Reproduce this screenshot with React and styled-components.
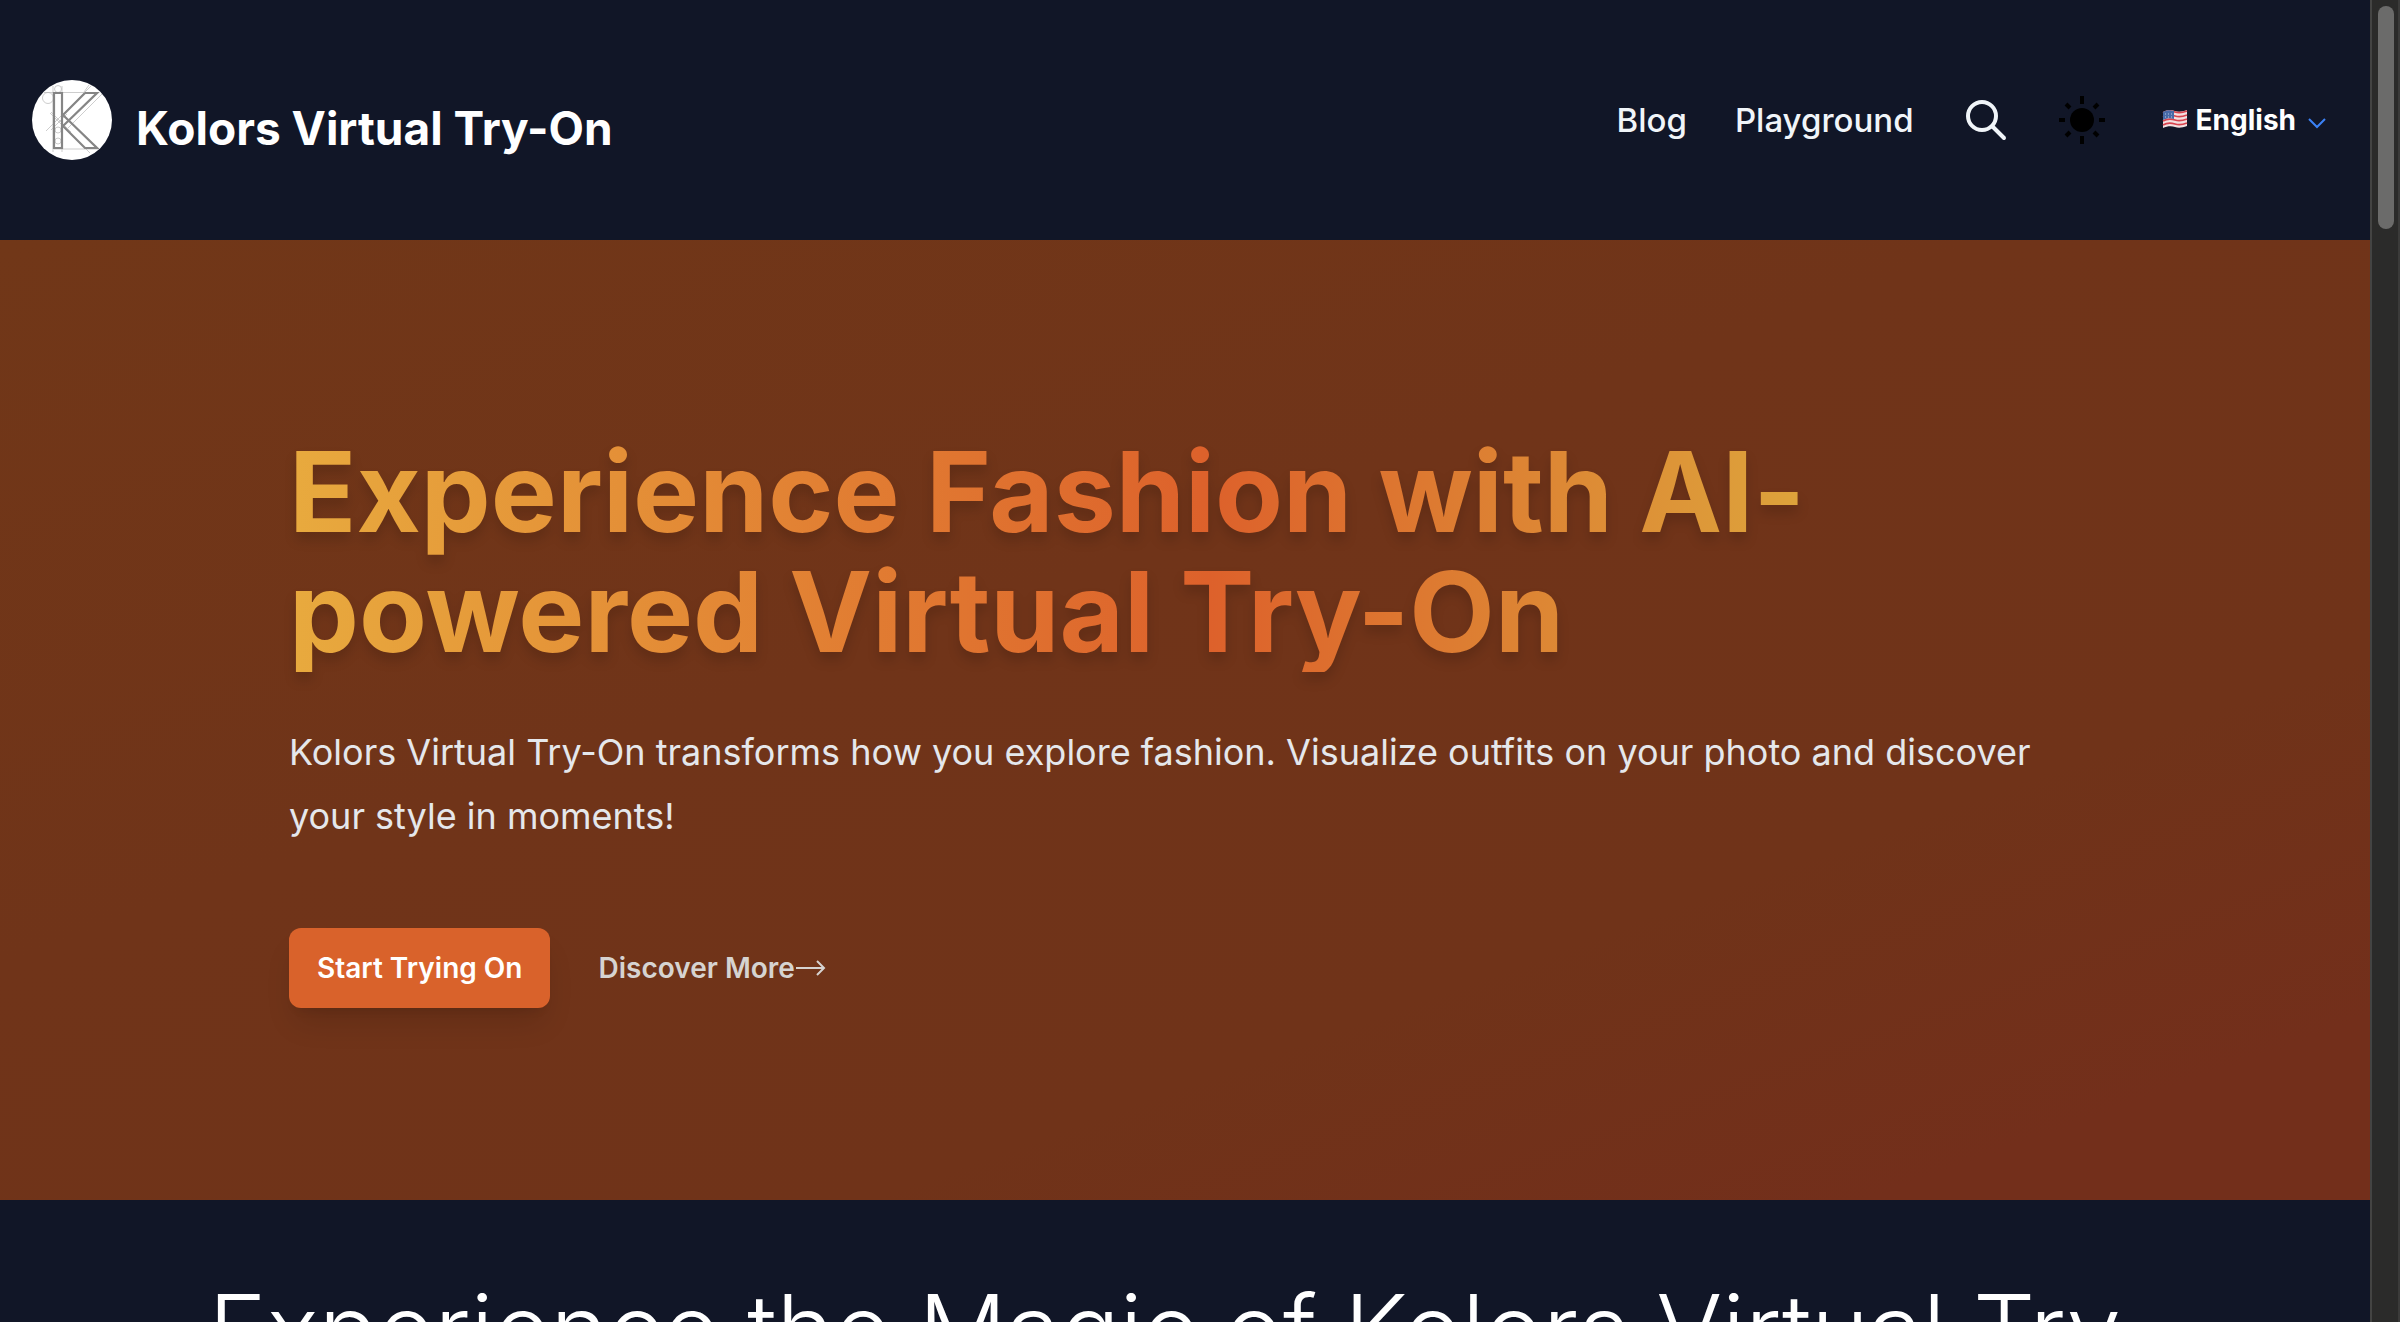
import React from "react";
import styled, { createGlobalStyle } from "styled-components";

const GlobalStyle = createGlobalStyle`
    * {
        box-sizing: border-box;
    }
    body {
        margin: 0;
        background-color: #111627;
        color: #fff;
        font-family: Inter, "Liberation Sans", sans-serif;
        overflow: hidden;
    }
    a {
        color: inherit;
        text-decoration: none;
    }
`;

const Page = styled.div`
    display: flex;
    height: 100vh;
    overflow: hidden;
`;

const Content = styled.div`
    flex: 1;
    min-width: 0;
`;

const ScrollTrack = styled.div`
    flex: none;
    width: 30px;
    padding: 6px 4px 6px 6px;
    background-color: #2b2b2a;
    border-left: 2px solid #444443;
    border-right: 2px solid #3b3b3a;
`;

const ScrollThumb = styled.div`
    width: 16px;
    height: 223px;
    border-radius: 8px;
    background-color: #6b6b6a;
`;

const Header = styled.header`
    display: flex;
    align-items: center;
    justify-content: space-between;
    height: 240px;
    padding: 0 44px 0 32px;
`;

const Brand = styled.a`
    display: flex;
    align-items: center;
    gap: 24px;
`;

const LogoIcon = styled.svg`
    width: 80px;
    height: 80px;
`;

const BrandName = styled.span`
    padding-top: 16px;
    font-size: 46px;
    font-weight: 700;
    line-height: 60px;
`;

const Nav = styled.nav`
    display: flex;
    align-items: center;
    gap: 48px;
`;

const NavLink = styled.a`
    color: #f1f5f9;
    font-size: 33px;
    font-weight: 500;
`;

const IconButton = styled.button`
    display: flex;
    padding: 0;
    border: none;
    background: none;
    color: ${(props) => props.$color};
    cursor: pointer;
`;

const LanguageButton = styled.button`
    display: flex;
    align-items: center;
    gap: 8px;
    padding: 0 0 0 8px;
    border: none;
    background: none;
    color: #fff;
    font-family: inherit;
    font-size: 28px;
    font-weight: 700;
    cursor: pointer;
`;

const Hero = styled.section`
    padding: 192px 64px;
    background: linear-gradient(160deg, #713718, #703419 40%, #703319 70%, #732f1b 90%);
`;

const HeroInner = styled.div`
    max-width: 1792px;
    margin: 0 auto;
`;

const HeroTitle = styled.h1`
    width: fit-content;
    max-width: 1536px;
    margin: 0;
    font-size: 111px;
    font-weight: 700;
    line-height: 120px;
    color: transparent;
    background: linear-gradient(to right, #e8aa3e, #dd612b 60%, #dda63c);
    background-clip: text;
    -webkit-background-clip: text;
    filter: drop-shadow(0 8px 6px rgba(0, 0, 0, 0.14));
`;

const HeroText = styled.p`
    margin: 48px 0 0;
    color: #e5e7eb;
    font-size: 36px;
    line-height: 64px;
`;

const HeroActions = styled.div`
    display: flex;
    align-items: center;
    gap: 48px;
    margin-top: 80px;
`;

const PrimaryButton = styled.button`
    height: 80px;
    padding: 0 28px;
    border: none;
    border-radius: 12px;
    background-color: #d9622b;
    box-shadow: 0 20px 30px -6px rgba(0, 0, 0, 0.12), 0 8px 12px -8px rgba(0, 0, 0, 0.12);
    color: #fff;
    font-family: inherit;
    font-size: 28px;
    font-weight: 600;
    cursor: pointer;
`;

const MoreLink = styled.a`
    display: flex;
    align-items: center;
    color: #d6d3d1;
    font-size: 28px;
    font-weight: 600;
`;

const Intro = styled.section`
    max-width: 2016px;
    margin: 0 auto;
    padding-top: 80px;
    text-align: center;
`;

const IntroTitle = styled.h2`
    margin: 0;
    font-size: 98px;
    font-weight: 300;
    line-height: 100px;
`;

const Logo = () => (
    <LogoIcon viewBox="0 0 80 80" fill="none" aria-hidden="true">
        <circle cx="40" cy="40" r="40" fill="#fff" />
        <g stroke="#b8b8b8" strokeWidth="0.7">
            <circle cx="16" cy="18" r="5.5" />
            <circle cx="26" cy="9" r="3.5" />
            <circle cx="26" cy="50" r="3" />
            <circle cx="26" cy="61" r="3" />
            <path d="M12 12.5h54M22 69h44M21 6v66M30 6v66M14 51l46-46M18 33l40 40M36 48l34-34M52 12l5-7M19 32l20 20M35 34L19 50" />
        </g>
        <path d="M22 13h8v55h-8zM53 13h12L31 46M31 35l22-22M31 35l34 33H53L31 46" stroke="#858585" strokeWidth="2.2" />
    </LogoIcon>
);

const SearchIcon = () => (
    <svg width="48" height="48" viewBox="0 0 48 48" fill="none" stroke="currentColor" strokeWidth="4" strokeLinecap="round">
        <circle cx="20" cy="20" r="14" />
        <path d="M30.5 30.5L42 42" />
    </svg>
);

const SunIcon = () => (
    <svg width="48" height="48" viewBox="0 0 48 48" fill="none" stroke="currentColor" strokeWidth="4">
        <circle cx="24" cy="24" r="12" fill="currentColor" stroke="none" />
        <path d="M24 0v8M24 40v8M1 24h6M41 24h6M8 8l4 4M40 8l-4 4M8 40l4-4M40 40l-4-4" />
    </svg>
);

const FlagIcon = () => (
    <svg width="26" height="22" viewBox="0 0 26 22" aria-hidden="true">
        <path d="M1 3C6 0 10 1 13 2s7 1 12-1v16c-5 2-9 2-12 1s-8-1-12 1z" fill="#f3dfe0" />
        <path d="M1 4c5-3 9-2 12-1s7 1 12-1M1 8c5-3 9-2 12-1s7 1 12-1M1 12c5-3 9-2 12-1s7 1 12-1M1 16c5-3 9-2 12-1s7 1 12-1" fill="none" stroke="#d8434e" strokeWidth="1.8" />
        <path d="M1 3C5 1 8 1 12 2v8c-4-1-7-1-11 1z" fill="#476aa8" />
        <path d="M3 5h8M3 8h8" stroke="#b9c8e2" strokeWidth="1" strokeDasharray="1 2" />
    </svg>
);

const ChevronIcon = styled.svg`
    width: 18px;
    height: 18px;
    margin-left: 4px;
`;

const ArrowIcon = () => (
    <svg width="31" height="16" viewBox="0 0 31 16" fill="none" stroke="currentColor" strokeWidth="2" aria-hidden="true">
        <path d="M1 8h28M22 1l7 7-7 7" />
    </svg>
);

export default function App() {
    return (
        <Page>
            <GlobalStyle />
            <Content>
                <Header>
                    <Brand href="#">
                        <Logo />
                        <BrandName>Kolors Virtual Try-On</BrandName>
                    </Brand>
                    <Nav>
                        <NavLink href="#blog">Blog</NavLink>
                        <NavLink href="#playground">Playground</NavLink>
                        <IconButton $color="#f1f5f9" aria-label="Search">
                            <SearchIcon />
                        </IconButton>
                        <IconButton $color="#000" aria-label="Toggle theme">
                            <SunIcon />
                        </IconButton>
                        <LanguageButton>
                            <FlagIcon />
                            English
                            <ChevronIcon viewBox="0 0 18 18" fill="none" stroke="#3b82f6" strokeWidth="2">
                                <path d="M1 8l8 8 8-8" />
                            </ChevronIcon>
                        </LanguageButton>
                    </Nav>
                </Header>
                <Hero>
                    <HeroInner>
                        <HeroTitle>Experience Fashion with AI-powered Virtual Try-On</HeroTitle>
                        <HeroText>
                            Kolors Virtual Try-On transforms how you explore fashion. Visualize outfits on your
                            photo and discover your style in moments!
                        </HeroText>
                        <HeroActions>
                            <PrimaryButton>Start Trying On</PrimaryButton>
                            <MoreLink href="#more">
                                Discover More
                                <ArrowIcon />
                            </MoreLink>
                        </HeroActions>
                    </HeroInner>
                </Hero>
                <Intro>
                    <IntroTitle>Experience the Magic of Kolors Virtual Try-On</IntroTitle>
                </Intro>
            </Content>
            <ScrollTrack>
                <ScrollThumb />
            </ScrollTrack>
        </Page>
    );
}
